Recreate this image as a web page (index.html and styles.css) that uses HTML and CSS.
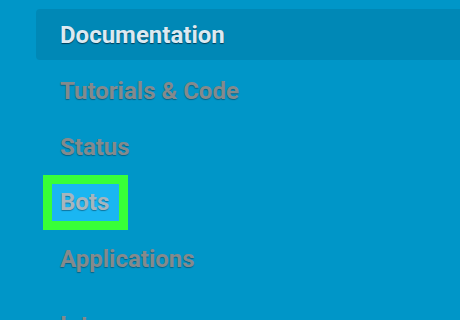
FILE: index.html
```html
<!DOCTYPE html>
<html lang="en">
<head>
  <meta charset="UTF-8">
  <meta name="viewport" content="width=device-width, initial-scale=1.0">
  <title>Developers</title>
  <link rel="stylesheet" href="styles.css">
</head>
<body>
  <nav class="sidebar">
    <ul>
      <li class="active"><a href="#">Documentation</a></li>
      <li><a href="#">Tutorials &amp; Code</a></li>
      <li><a href="#">Status</a></li>
      <li class="marked"><a href="#">Bots</a></li>
      <li><a href="#">Applications</a></li>
      <li class="section"><a href="#">Intro</a></li>
    </ul>
  </nav>
</body>
</html>
```

FILE: styles.css
```css
body {
  margin: 0;
  padding: 0;
  background-color: #0096c8;
  font-family: Roboto, "Liberation Sans", Arial, sans-serif;
  height: 320px;
  overflow: hidden;
}

.sidebar ul {
  list-style-type: none;
  margin: 9px 0 0 36px;
  padding: 0;
}

.sidebar li {
  height: 51px;
  margin-bottom: 5px;
  padding-left: 24px;
  display: flex;
  align-items: center;
}

.sidebar a {
  color: #848a8c;
  text-decoration: none;
  font-size: 24px;
  font-weight: 700;
  text-shadow: 0 1px 1px rgba(0, 40, 60, 0.45);
}

.sidebar li.active {
  background-color: #0088b6;
  border-radius: 4px 0 0 4px;
}

.sidebar li.active a {
  color: #dce9f1;
  text-shadow: 0 1px 1px rgba(0, 30, 50, 0.7);
}

.sidebar li.marked a {
  display: inline-block;
  margin-left: -17px;
  padding: 4px 10px 5px 8px;
  border: 9px solid #38ff38;
  background-color: #1ab6f2;
  color: #a7b5bd;
}

.sidebar li.section {
  margin-top: 15px;
}
```
